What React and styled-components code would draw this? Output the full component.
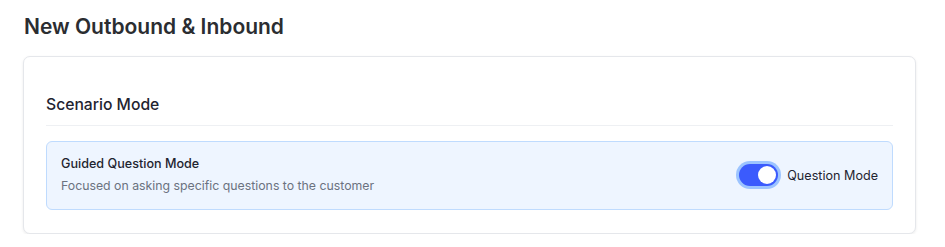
import React, { useState } from 'react'
import styled, { createGlobalStyle } from 'styled-components'

const GlobalStyle = createGlobalStyle`
  body {
    margin: 0;
    background: #ffffff;
    font-family: Inter, "Noto Sans", sans-serif;
    -webkit-font-smoothing: antialiased;
  }
`;

const Page = styled.div`
  padding: 14px 29px 0 23px;
`;

const PageTitle = styled.h1`
  margin: 0 0 16px 1px;
  font-size: 21px;
  line-height: 26px;
  font-weight: 600;
  color: #2b2d31;
`;

const Card = styled.div`
  border: 1px solid #e5e7eb;
  border-radius: 7px;
  background: #fff;
  box-shadow: 0 1px 3px rgba(0, 0, 0, 0.08);
  padding: 36px 22px 23px 22px;
`;

const SectionTitle = styled.h2`
  margin: 0;
  font-size: 15.7px;
  line-height: 24px;
  font-weight: 500;
  color: #1f2430;
  padding-bottom: 8px;
  border-bottom: 1px solid #eef0f3;
`;

const ModeBox = styled.div`
  margin-top: 15px;
  display: flex;
  align-items: center;
  justify-content: space-between;
  background: #eef5ff;
  border: 1px solid #bfdbfe;
  border-radius: 6px;
  padding: 12px 14px 13px 14px;
`;

const ModeText = styled.div`
  display: flex;
  flex-direction: column;
  gap: 2px;
`;

const ModeTitle = styled.div`
  font-size: 12.6px;
  line-height: 20px;
  font-weight: 500;
  color: #1f2430;
`;

const ModeDesc = styled.div`
  font-size: 12.3px;
  line-height: 20px;
  color: #6b7280;
`;

const ToggleWrap = styled.label`
  display: flex;
  align-items: center;
  gap: 9px;
  cursor: pointer;
  font-size: 12.6px;
  font-weight: 400;
  color: #1f2430;
`;

const Track = styled.span`
  position: relative;
  width: 39px;
  height: 22px;
  border-radius: 11px;
  background: ${p => (p.$on ? '#3b5bfd' : '#d1d5db')};
  box-shadow: 0 0 0 3px ${p => (p.$on ? '#9cc4ff' : 'transparent')};
  transition: background 0.2s;
`;

const Knob = styled.span`
  position: absolute;
  top: 2px;
  left: ${p => (p.$on ? '19px' : '2px')};
  width: 18px;
  height: 18px;
  border-radius: 50%;
  background: #fff;
  transition: left 0.2s;
`;

const App = () => {
  const [on, setOn] = useState(true)

  return (
    <>
      <GlobalStyle />
      <Page>
        <PageTitle>New Outbound &amp; Inbound</PageTitle>
        <Card>
          <SectionTitle>Scenario Mode</SectionTitle>
          <ModeBox>
            <ModeText>
              <ModeTitle>Guided Question Mode</ModeTitle>
              <ModeDesc>Focused on asking specific questions to the customer</ModeDesc>
            </ModeText>
            <ToggleWrap onClick={() => setOn(!on)}>
              <Track $on={on}>
                <Knob $on={on} />
              </Track>
              Question Mode
            </ToggleWrap>
          </ModeBox>
        </Card>
      </Page>
    </>
  )
}

export default App
